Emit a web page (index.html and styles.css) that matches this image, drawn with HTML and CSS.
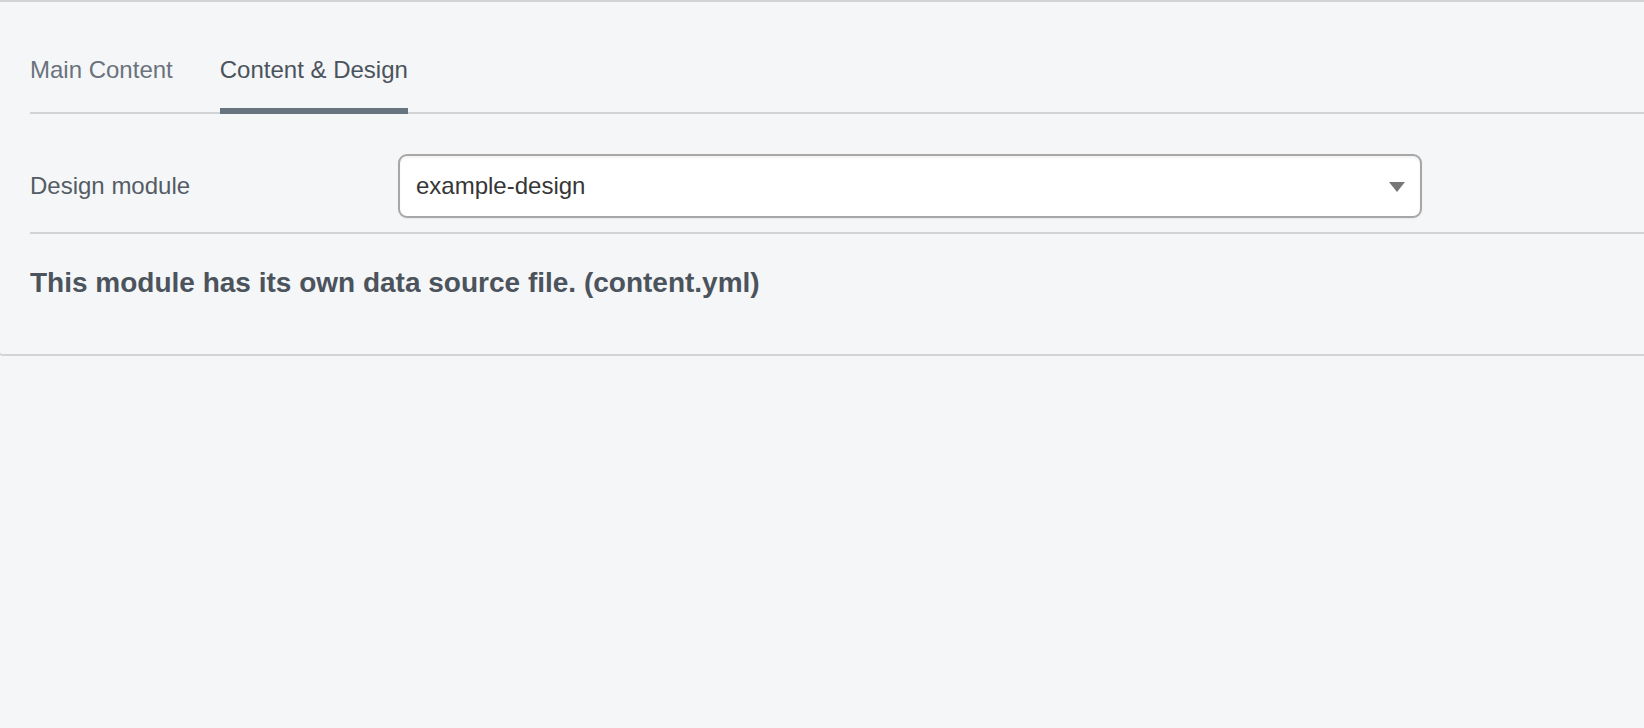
FILE: index.html
```html
<!DOCTYPE html>
<html>
<head>
<meta charset="utf-8">
<link rel="stylesheet" href="styles.css">
</head>
<body>
<div class="card">
  <div class="tabs">
    <div class="tab">Main Content</div>
    <div class="tab active">Content &amp; Design</div>
  </div>
  <div class="form-row">
    <div class="label">Design module</div>
    <div class="select">
      <span class="value">example-design</span>
      <span class="arrow"></span>
    </div>
  </div>
  <div class="note">This module has its own data source file. (content.yml)</div>
</div>
</body>
</html>
```

FILE: styles.css
```css
html, body {
  margin: 0;
  padding: 0;
  background: #f5f6f8;
  font-family: "Liberation Sans", Arial, Helvetica, sans-serif;
}

.card {
  margin-left: -1px;
  margin-right: -10px;
  border-top: 2px solid #d1d3d6;
  border-bottom: 2px solid #d1d3d6;
  border-left: 1px solid #d1d3d6;
  border-bottom-left-radius: 4px;
  padding-left: 30px;
  padding-bottom: 55px;
}

.tabs {
  display: flex;
  gap: 47px;
  padding-top: 54px;
  border-bottom: 2px solid #d1d3d6;
}

.tab {
  font-size: 24px;
  line-height: 28px;
  color: #6a737d;
  padding-bottom: 24px;
}

.tab.active {
  color: #4b535c;
  border-bottom: 6px solid #67737f;
  margin-bottom: -2px;
}

.form-row {
  display: flex;
  align-items: center;
  padding-top: 40px;
  padding-bottom: 14px;
  border-bottom: 2px solid #d1d3d6;
}

.label {
  width: 368px;
  flex: none;
  font-size: 24px;
  line-height: 28px;
  color: #545c65;
}

.select {
  width: 1020px;
  height: 60px;
  box-sizing: content-box;
  border: 2px solid #a7a7a7;
  border-radius: 9px;
  background: #ffffff;
  box-shadow: inset 0 2px 3px rgba(0, 0, 0, 0.05), 0 1px 2px rgba(0, 0, 0, 0.06);
  display: flex;
  align-items: center;
  justify-content: space-between;
}

.value {
  margin-left: 16px;
  font-size: 24px;
  line-height: 28px;
  color: #363636;
}

.arrow {
  margin-right: 15px;
  width: 0;
  height: 0;
  border-left: 8px solid transparent;
  border-right: 8px solid transparent;
  border-top: 10px solid #777777;
  margin-top: 2px;
}

.note {
  margin-top: 33px;
  font-size: 28px;
  line-height: 32px;
  font-weight: bold;
  color: #4b535c;
}
```
